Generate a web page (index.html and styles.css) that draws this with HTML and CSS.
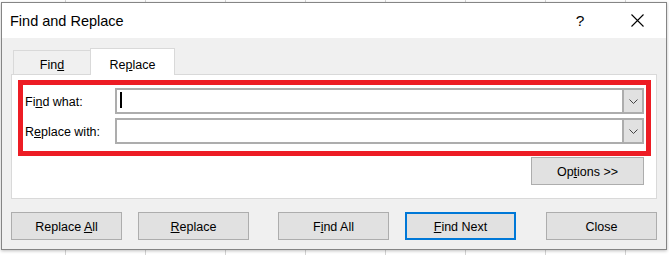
FILE: index.html
```html
<!DOCTYPE html>
<html>
<head>
<meta charset="utf-8">
<link rel="stylesheet" href="styles.css">
</head>
<body>
<div class="window">
  <div class="titlebar">
    <div class="title">Find and Replace</div>
    <div class="tb-btn help">?</div>
    <div class="tb-btn close">
      <svg width="13" height="13" viewBox="0 0 13 13"><path d="M0.5 0.5 L12.5 12.5 M12.5 0.5 L0.5 12.5" stroke="#000" stroke-width="1.1" fill="none"/></svg>
    </div>
  </div>
  <div class="client">
    <div class="tabs">
      <div class="tab">Fin<u>d</u></div>
      <div class="tab active">Re<u>p</u>lace</div>
    </div>
    <div class="panel">
      <div class="row">
        <div class="lbl">Fi<u>n</u>d what:</div>
        <div class="combo">
          <div class="field"><span class="caret"></span></div>
          <div class="drop"><svg width="9" height="5" viewBox="0 0 9 5"><path d="M0.5 0.5 L4.5 4.5 L8.5 0.5" stroke="#444" stroke-width="1" fill="none"/></svg></div>
        </div>
      </div>
      <div class="row">
        <div class="lbl">R<u>e</u>place with:</div>
        <div class="combo">
          <div class="field"></div>
          <div class="drop"><svg width="9" height="5" viewBox="0 0 9 5"><path d="M0.5 0.5 L4.5 4.5 L8.5 0.5" stroke="#444" stroke-width="1" fill="none"/></svg></div>
        </div>
      </div>
      <div class="opt-row">
        <div class="btn opt"><span>Op<u>t</u>ions &gt;&gt;</span></div>
      </div>
      <div class="highlight"></div>
    </div>
    <div class="actions">
      <div class="btn"><span>Replace <u>A</u>ll</span></div>
      <div class="btn gap-sm"><span><u>R</u>eplace</span></div>
      <div class="btn gap-lg"><span>F<u>i</u>nd All</span></div>
      <div class="btn gap-sm primary"><span><u>F</u>ind Next</span></div>
      <div class="btn gap-auto"><span>Close</span></div>
    </div>
  </div>
</div>
</body>
</html>
```
FILE: styles.css
```css
html, body {
  margin: 0;
}
body {
  width: 669px;
  height: 255px;
  overflow: hidden;
  box-sizing: border-box;
  padding: 2px 0 0 1px;
  background: #fff repeating-linear-gradient(to right, transparent 0 65px, #d4d4d4 65px 66px, transparent 66px 80px);
  font-family: "Liberation Sans", Arial, sans-serif;
  color: #000;
}
.window {
  box-sizing: border-box;
  width: 666px;
  height: 248px;
  border: 1px solid #858585;
  background: #f0f0f0;
  display: flex;
  flex-direction: column;
  box-shadow: 0 1px 3px rgba(0, 0, 0, 0.25);
}
.titlebar {
  height: 35px;
  flex: none;
  background: #fff;
  display: flex;
  align-items: center;
}
.title {
  flex: 1;
  padding-left: 8px;
  font-size: 14.5px;
}
.tb-btn {
  height: 35px;
  display: flex;
  align-items: center;
  justify-content: center;
}
.help {
  width: 46px;
  margin-right: 12px;
  font-size: 15.5px;
}
.close {
  width: 45px;
  margin-right: 6px;
}
.client {
  flex: 1;
  display: flex;
  flex-direction: column;
  padding: 10px 9px 0;
}
.tabs {
  display: flex;
  align-items: flex-end;
  padding-left: 2px;
}
.tab {
  box-sizing: border-box;
  width: 77px;
  height: 24px;
  border: 1px solid #d9d9d9;
  border-right: 0;
  border-bottom: 0;
  padding-top: 7px;
  text-align: center;
  font-size: 12.5px;
  line-height: 14px;
}
.tab.active {
  width: 85px;
  height: 27px;
  margin-bottom: -1px;
  border-right: 1px solid #d9d9d9;
  background: #fff;
  padding-top: 9px;
  position: relative;
  z-index: 1;
}
.panel {
  position: relative;
  box-sizing: border-box;
  height: 125px;
  border: 1px solid #d9d9d9;
  background: #fff;
  padding: 13px 12px 0 13px;
  display: flex;
  flex-direction: column;
}
.row {
  display: flex;
  align-items: center;
  height: 26px;
}
.row + .row {
  margin-top: 4px;
}
.lbl {
  width: 90px;
  font-size: 12.5px;
  padding-top: 2px;
}
.combo {
  flex: 1;
  box-sizing: border-box;
  height: 26px;
  border: 2px solid #adadad;
  display: flex;
}
.field {
  flex: 1;
}
.caret {
  display: block;
  width: 2px;
  height: 16px;
  margin: 2px 0 0 3px;
  background: #000;
}
.drop {
  width: 18px;
  border-left: 2px solid #adadad;
  background: #e1e1e1;
  display: flex;
  align-items: center;
  justify-content: center;
}
.drop svg {
  display: block;
}
.opt-row {
  display: flex;
  justify-content: flex-end;
  margin-top: 13px;
}
.btn {
  box-sizing: border-box;
  width: 111px;
  height: 28px;
  border: 1px solid #adadad;
  background: #e1e1e1;
  display: flex;
  align-items: center;
  justify-content: center;
  font-size: 12.5px;
  padding-top: 2px;
}
.btn.opt {
  width: 113px;
}
.btn.primary {
  border: 2px solid #0078d7;
}
.highlight {
  position: absolute;
  left: 6px;
  top: 5px;
  width: 633px;
  height: 76px;
  box-sizing: border-box;
  border: 5px solid #ed1c24;
  pointer-events: none;
}
.actions {
  display: flex;
  margin-top: 13px;
}
.gap-sm {
  margin-left: 16px;
}
.gap-lg {
  margin-left: 29px;
}
.gap-auto {
  margin-left: auto;
}
u {
  text-underline-offset: 1px;
}
```
